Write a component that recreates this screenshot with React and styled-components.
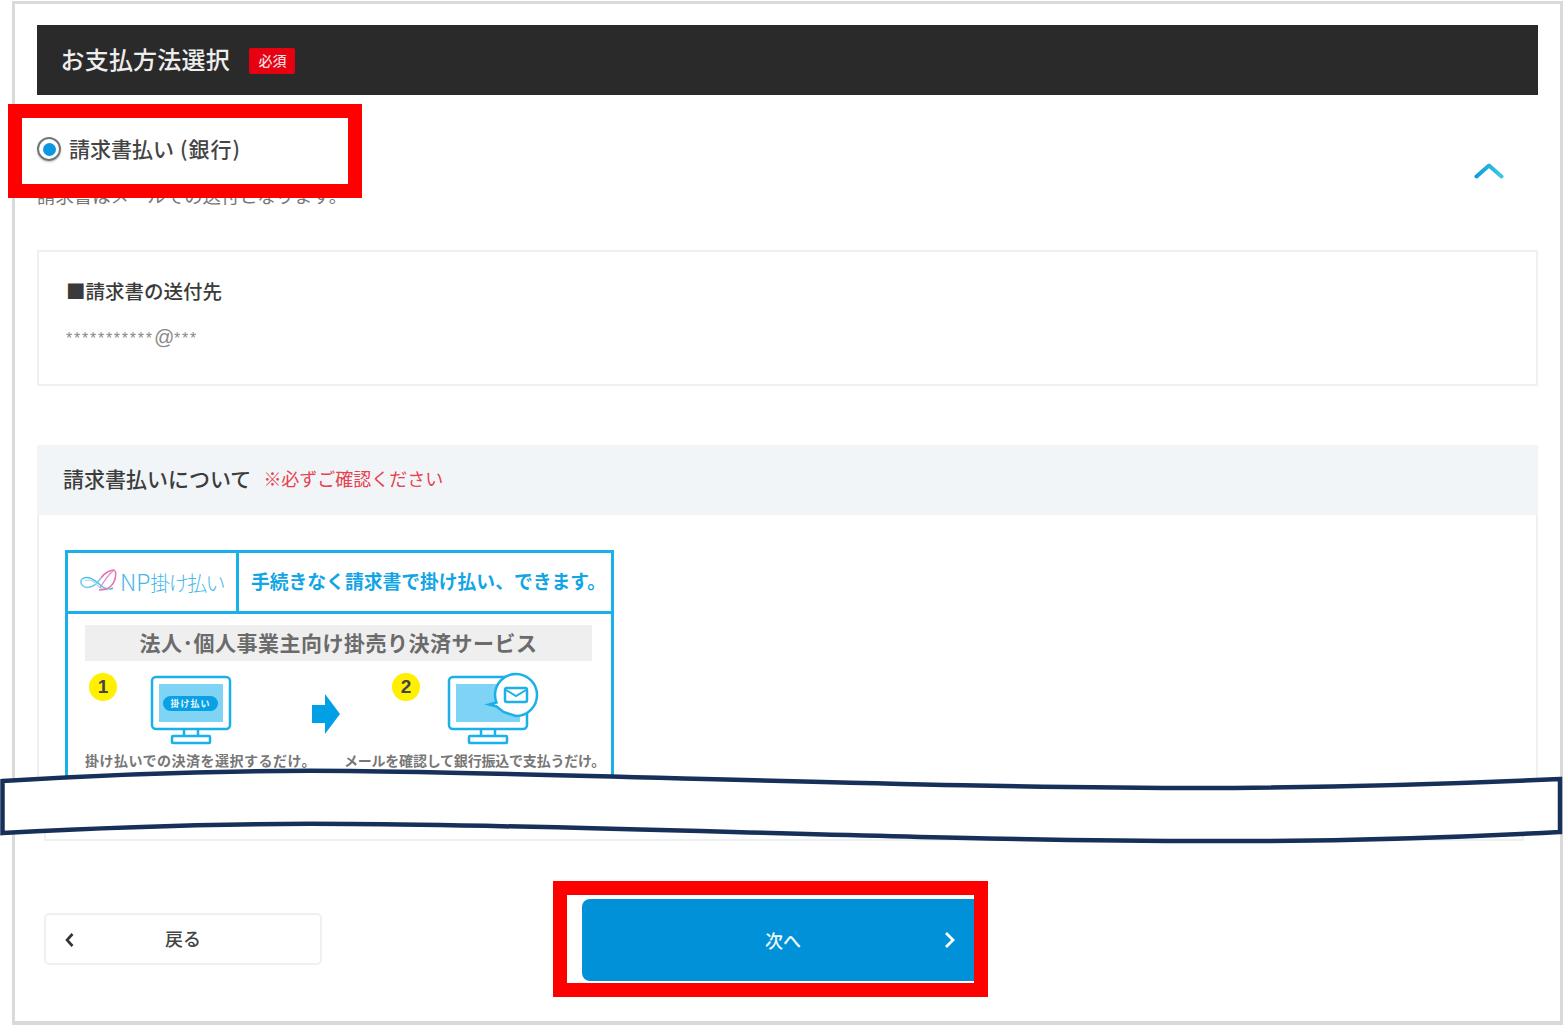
import React from "react";
import styled, { createGlobalStyle } from "styled-components";

const GlobalStyle = createGlobalStyle`
  html, body {
    margin: 0;
    padding: 0;
    background: #fff;
    overflow: hidden;
  }
  body {
    font-family: "Noto Sans CJK JP", "Noto Sans", sans-serif;
  }
`;

const Page = styled.div`
  position: relative;
  width: 1565px;
  height: 1025px;
  padding: 1px 2px 0 12px;
  box-sizing: border-box;
`;

const Frame = styled.main`
  height: 1024px;
  box-sizing: border-box;
  border: 3px solid #dadada;
  border-bottom-width: 4px;
  padding: 21px 22px 0;
`;

const TitleBar = styled.header`
  height: 70px;
  box-sizing: border-box;
  background: #2a2a2a;
  display: flex;
  align-items: center;
  padding: 0 0 2px 23.5px;
  gap: 19.5px;
`;

const Title = styled.h2`
  margin: 0;
  font-size: 24px;
  font-weight: 500;
  letter-spacing: 0.2px;
  color: #eeeeee;
  line-height: 1;
`;

const RequiredTag = styled.span`
  width: 46px;
  height: 26px;
  padding-bottom: 2px;
  box-sizing: border-box;
  background: #e60012;
  border-radius: 2px;
  color: #f6dcdc;
  font-size: 14px;
  font-weight: 500;
  display: flex;
  align-items: center;
  justify-content: center;
  margin-top: 3px;
`;

const MethodRow = styled.div`
  display: flex;
  justify-content: space-between;
  padding: 42px 34px 0 0;
`;

const RadioLabel = styled.label`
  display: flex;
  align-items: center;
  height: 24px;
  gap: 8px;
  font-size: 21px;
  font-weight: 500;
  color: #444;
  position: relative;
`;

const RadioText = styled.span`
  margin-top: -3px;
`;

const Bracketed = styled.span`
  margin-left: 6px;
  letter-spacing: 1px;
`;

const Radio = styled.span`
  width: 24px;
  height: 24px;
  box-sizing: border-box;
  border-radius: 50%;
  border: 2px solid #70767a;
  box-shadow: 0 1px 2px rgba(0, 0, 0, 0.25);
  display: flex;
  align-items: center;
  justify-content: center;

  &::after {
    content: "";
    width: 13px;
    height: 13px;
    border-radius: 50%;
    background: #0a98e0;
  }
`;

const Chevron = styled.svg`
  width: 30px;
  height: 18px;
  margin-top: 25px;
`;

const Note = styled.p`
  margin: 3px 0 43px;
  font-size: 18.4px;
  line-height: 24px;
  color: #777;
`;

const AddressBox = styled.section`
  height: 136px;
  box-sizing: border-box;
  border: 2px solid #eef1f3;
  padding: 25px 27px 0;
`;

const AddressTitle = styled.h3`
  margin: 0;
  font-size: 19.5px;
  line-height: 28px;
  font-weight: 500;
  color: #3a3a3a;
`;

const AddressValue = styled.p`
  margin: 20px 0 0;
  font-family: "Liberation Sans", sans-serif;
  font-size: 16px;
  line-height: 24px;
  letter-spacing: 1.75px;
  color: #8a8a8a;

  em {
    font-size: 20px;
    letter-spacing: 0;
  }
`;

const InfoHead = styled.div`
  margin-top: 59px;
  height: 70px;
  box-sizing: border-box;
  background: #f1f5f8;
  display: flex;
  align-items: center;
  gap: 12px;
  padding: 0 0 4px 26px;
`;

const InfoTitle = styled.h3`
  margin: 0;
  font-size: 21px;
  font-weight: 500;
  color: #3c3c3c;
`;

const InfoWarning = styled.span`
  font-size: 18px;
  color: #e8424f;
`;

const InfoBody = styled.div`
  height: 285px;
  box-sizing: border-box;
  border: solid #eef1f3;
  border-width: 0 2px;
  padding: 35px 0 0 26px;
  overflow: hidden;
`;

const InfoEnd = styled.div`
  height: 41px;
  box-sizing: border-box;
  margin: 0 14px 0 7px;
  border: solid #eef1f3;
  border-width: 0 2px 2px;
`;

const Banner = styled.div`
  width: 549px;
  box-sizing: border-box;
  border: 3px solid #1ab0ea;
  border-bottom: 0;
`;

const BannerHead = styled.div`
  height: 58px;
  display: flex;
  border-bottom: 3px solid #1ab0ea;
`;

const BrandCell = styled.div`
  width: 171px;
  display: flex;
  align-items: center;
  padding: 0 0 3px 12px;
  box-sizing: border-box;
  border-right: 3px solid #1ab0ea;
  gap: 2px;
`;

const BrandName = styled.span`
  font-size: 20px;
  font-weight: 300;
  color: #45b8ea;
  letter-spacing: -1.6px;
  white-space: nowrap;

  b {
    font-size: 23px;
    font-weight: 300;
    letter-spacing: 0;
  }
`;

const Tagline = styled.div`
  flex: 1;
  display: flex;
  align-items: center;
  padding: 0 0 3px 12px;
  font-size: 18.8px;
  font-weight: 700;
  color: #12a5e5;
  white-space: nowrap;
`;

const BannerBody = styled.div`
  padding: 11px 19px 30px 17px;
`;

const ServiceBar = styled.div`
  height: 36px;
  box-sizing: border-box;
  padding-bottom: 3px;
  background: #efefef;
  display: flex;
  align-items: center;
  justify-content: center;
  font-size: 21px;
  font-weight: 700;
  letter-spacing: 0.5px;
  color: #6b6b6b;
  white-space: nowrap;
`;

const Steps = styled.div`
  display: flex;
  align-items: flex-start;
  height: 89px;
  padding-top: 11px;
  box-sizing: border-box;
`;

const StepNumber = styled.span`
  flex: none;
  width: 28px;
  height: 28px;
  border-radius: 50%;
  background: #fff000;
  color: #444;
  font-family: "Liberation Sans", sans-serif;
  font-size: 19px;
  font-weight: 700;
  display: flex;
  align-items: center;
  justify-content: center;
  margin: 1px 0 0 ${(p) => p.$offset}px;
`;

const Drawing = styled.svg`
  flex: none;
  margin-left: ${(p) => p.$offset}px;
  margin-top: ${(p) => p.$top}px;
`;

const Captions = styled.div`
  display: flex;
  font-size: 14px;
  line-height: 20px;
  font-weight: 700;
  color: #777;
  white-space: nowrap;
`;

const Caption = styled.span`
  margin-left: ${(p) => p.$offset || 0}px;
  letter-spacing: ${(p) => p.$spacing}px;
`;

const Footer = styled.footer`
  display: flex;
  align-items: center;
  margin-top: 58px;
  padding-left: 7px;
`;

const BackButton = styled.button`
  width: 278px;
  height: 52px;
  margin-top: -2px;
  box-sizing: border-box;
  border: 2px solid #eef0f2;
  border-radius: 5px;
  background: #fff;
  display: grid;
  grid-template-columns: 1fr auto 1fr;
  align-items: center;
  padding: 0 18px 2px;
  font: inherit;
  font-size: 18px;
  font-weight: 500;
  color: #444;

  svg {
    margin-top: 3px;
  }
`;

const NextButton = styled.button`
  width: 404px;
  height: 82px;
  margin-left: 260px;
  box-sizing: border-box;
  border: 0;
  border-radius: 8px;
  background: #0091d8;
  display: grid;
  grid-template-columns: 1fr auto 1fr;
  align-items: center;
  padding: 0 31px 1px 29px;
  font: inherit;
  font-size: 18px;
  font-weight: 500;
  color: #f2f8fc;
`;

const ButtonIcon = styled.svg`
  width: 11px;
  height: 16px;
  justify-self: ${(p) => p.$side};
`;

const Callout = styled.div`
  position: absolute;
  left: ${(p) => p.$left}px;
  top: ${(p) => p.$top}px;
  width: ${(p) => p.$width}px;
  height: ${(p) => p.$height}px;
  box-sizing: border-box;
  border: 14px solid #ff0000;
  pointer-events: none;
`;

const PageBreak = styled.svg`
  position: absolute;
  left: 0;
  top: 765px;
  width: 1565px;
  height: 80px;
`;

function Monitor({ children }) {
  return (
    <>
      <rect x="2" y="2" width="78" height="52" rx="4" fill="#fff" stroke="#1ab0ea" strokeWidth="2.5" />
      <rect x="9" y="9" width="64" height="38" fill="#7fd3f5" />
      <path d="M34 54v7M48 54v7" stroke="#1ab0ea" strokeWidth="2.5" />
      <rect x="22" y="61" width="38" height="7" rx="1" fill="#fff" stroke="#1ab0ea" strokeWidth="2.5" />
      {children}
    </>
  );
}

export default function App() {
  return (
    <Page>
      <GlobalStyle />
      <Frame>
        <TitleBar>
          <Title>お支払方法選択</Title>
          <RequiredTag>必須</RequiredTag>
        </TitleBar>

        <MethodRow>
          <RadioLabel>
            <Radio />
            <RadioText>
              請求書払い<Bracketed>(銀行)</Bracketed>
            </RadioText>
          </RadioLabel>
          <Chevron viewBox="0 0 30 18" fill="none">
            <defs>
              <linearGradient id="chev" x1="0" x2="1" y1="0" y2="0">
                <stop offset="0" stopColor="#0e9ede" />
                <stop offset="1" stopColor="#3cc8e0" />
              </linearGradient>
            </defs>
            <path d="M2.5 14.500 15 3.500l12.500 11" stroke="url(#chev)" strokeWidth="4" strokeLinecap="round" strokeLinejoin="round" />
          </Chevron>
        </MethodRow>
        <Note>請求書はメールでの送付となります。</Note>

        <AddressBox>
          <AddressTitle>■請求書の送付先</AddressTitle>
          <AddressValue>***********<em>@</em>***</AddressValue>
        </AddressBox>

        <InfoHead>
          <InfoTitle>請求書払いについて</InfoTitle>
          <InfoWarning>※必ずご確認ください</InfoWarning>
        </InfoHead>
        <InfoBody>
          <Banner>
            <BannerHead>
              <BrandCell>
                <svg width="38" height="24" viewBox="0 0 38 24" fill="none">
                  <path d="M2 10C6 7 12 9 18 14c4 4 10 8 15 5" stroke="#4dbde8" strokeWidth="1.5" />
                  <path d="M2 10c-3 4 1 10 8 8 5-1 7-4 11-9" stroke="#6fcbec" strokeWidth="1.5" />
                  <path d="M5 12c4-2 9 0 13 5 3 3 8 5 12 3" stroke="#a5dff3" strokeWidth="1.2" />
                  <path d="M21 9c4-6 10-8 13-8 3 2 2 11-3 16-3 3-7 4-12 4" stroke="#ec6fb0" strokeWidth="1.5" />
                  <path d="M34 1c-6 5-10 11-14 18" stroke="#d58ccf" strokeWidth="1.2" />
                </svg>
                <BrandName><b>NP</b>掛け払い</BrandName>
              </BrandCell>
              <Tagline>手続きなく請求書で掛け払い、できます。</Tagline>
            </BannerHead>
            <BannerBody>
              <ServiceBar>法人･個人事業主向け掛売り決済サービス</ServiceBar>
              <Steps>
                <StepNumber $offset={4}>1</StepNumber>
                <Drawing $offset={33} $top={3} width="82" height="70" viewBox="0 0 82 70">
                  <Monitor>
                    <rect x="13" y="21" width="55" height="15" rx="7.5" fill="#0aa0e6" />
                    <text x="40.5" y="32" textAnchor="middle" fontSize="9" fontWeight="700" letterSpacing="1" fill="#e8f7fd">掛け払い</text>
                  </Monitor>
                </Drawing>
                <Drawing $offset={80} $top={22} width="28" height="40" viewBox="0 0 28 40">
                  <path d="M0 11h13V0l15 20-15 20V29H0z" fill="#00a0e6" />
                </Drawing>
                <StepNumber $offset={52}>2</StepNumber>
                <Drawing $offset={27} $top={0} width="92" height="74" viewBox="0 -3 92 74">
                  <Monitor>
                    <path d="M49.5 27.500 42 29.500l7.500 2 7 5.500 12.500 4c11.600 0 21-9.400 21-21S80.600-1 69-1 48 8.400 48 20c0 2.600.5 5.100 1.500 7.500z" fill="#fff" stroke="#1ab0ea" strokeWidth="2.5" />
                    <rect x="58" y="13" width="22" height="14" rx="2" fill="#fff" stroke="#1ab0ea" strokeWidth="2.5" />
                    <path d="M59 15l10 6 10-6" fill="none" stroke="#1ab0ea" strokeWidth="2" />
                  </Monitor>
                </Drawing>
              </Steps>
              <Captions>
                <Caption $spacing={0.5}>掛け払いでの決済を選択するだけ。</Caption>
                <Caption $offset={28} $spacing={-0.2}>メールを確認して銀行振込で支払うだけ。</Caption>
              </Captions>
            </BannerBody>
          </Banner>
        </InfoBody>
        <InfoEnd />

        <Footer>
          <BackButton type="button">
            <ButtonIcon $side="start" viewBox="0 0 11 16" fill="none">
              <path d="M8.5 2 3 8l5.500 6" stroke="#333" strokeWidth="2.6" />
            </ButtonIcon>
            戻る
            <span />
          </BackButton>
          <NextButton type="button">
            <span />
            次へ
            <ButtonIcon $side="end" viewBox="0 0 11 16" fill="none">
              <path d="M2 1l7 7-7 7" stroke="#fff" strokeWidth="2.8" />
            </ButtonIcon>
          </NextButton>
        </Footer>
      </Frame>

      <PageBreak viewBox="0 765 1565 80">
        <path
          d="M2.5 781C130 773 250 770 350 771 600 774 950 789 1234 788 1350 787 1450 784 1560 779L1560 832C1450 838 1350 841 1234 841 950 842 600 825 350 824 250 823 130 826 2.5 833Z"
          fill="#fff"
          stroke="#16305a"
          strokeWidth="4.5"
        />
      </PageBreak>
      <Callout $left={8} $top={104} $width={354} $height={94} />
      <Callout $left={553} $top={881} $width={435} $height={116} />
    </Page>
  );
}
